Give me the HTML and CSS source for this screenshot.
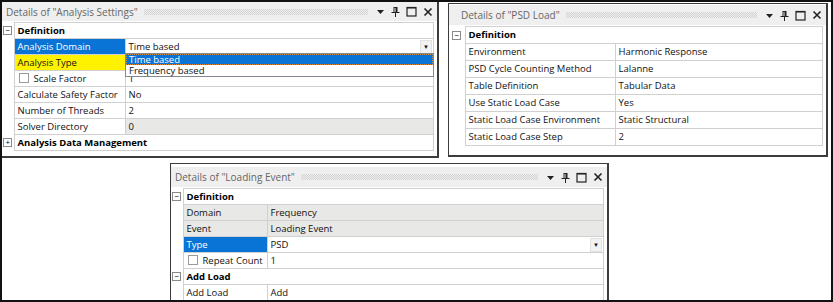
FILE: index.html
```html
<!DOCTYPE html>
<html lang="en">
<head>
    <meta charset="UTF-8">
    <title>Details panels</title>
    <link rel="stylesheet" href="styles.css">
</head>
<body>
    <div class="frame">
        <div class="top-row">
            <!-- Analysis Settings -->
            <div class="panel panel-analysis">
                <div class="titlebar">
                    <span class="title">Details of "Analysis Settings"</span>
                    <span class="grip"></span>
                    <span class="tb-icons">
                        <svg width="9" height="9" viewBox="0 0 9 9"><path d="M1 3h7L4.5 7z" fill="#222"/></svg>
                        <svg width="9" height="11" viewBox="0 0 9 11"><path d="M2.5 1h4v5h2v1H5v4H4V7H.5V6h2zM3.5 2v4h1V2z" fill="#222"/></svg>
                        <svg width="11" height="11" viewBox="0 0 11 11"><rect x="1" y="1.5" width="9" height="8.5" fill="none" stroke="#222" stroke-width="1.2"/><rect x="1" y="1" width="9" height="1.5" fill="#222"/></svg>
                        <svg width="10" height="10" viewBox="0 0 10 10"><path d="M1.5 1.5l7 7M8.5 1.5l-7 7" stroke="#222" stroke-width="1.6"/></svg>
                    </span>
                </div>
                <div class="grid-wrap">
                    <table class="grid">
                        <colgroup><col class="c-exp"><col class="c-label"><col></colgroup>
                        <tr class="group"><td class="exp"><span class="box">−</span></td><td colspan="2">Definition</td></tr>
                        <tr><td class="exp"></td><td class="sel">Analysis Domain</td><td class="drop">Time based<span class="arrow">▼</span></td></tr>
                        <tr><td class="exp"></td><td class="warn">Analysis Type</td><td></td></tr>
                        <tr><td class="exp"></td><td><span class="check"></span>Scale Factor</td><td>1</td></tr>
                        <tr><td class="exp"></td><td>Calculate Safety Factor</td><td>No</td></tr>
                        <tr><td class="exp"></td><td>Number of Threads</td><td>2</td></tr>
                        <tr><td class="exp"></td><td>Solver Directory</td><td class="ro">0</td></tr>
                        <tr class="group"><td class="exp"><span class="box">+</span></td><td colspan="2">Analysis Data Management</td></tr>
                    </table>
                    <ul class="dropdown">
                        <li class="picked">Time based</li>
                        <li>Frequency based</li>
                    </ul>
                </div>
            </div>

            <!-- PSD Load -->
            <div class="panel panel-psd">
                <div class="titlebar">
                    <span class="title">Details of "PSD Load"</span>
                    <span class="grip"></span>
                    <span class="tb-icons">
                        <svg width="9" height="9" viewBox="0 0 9 9"><path d="M1 3h7L4.5 7z" fill="#222"/></svg>
                        <svg width="9" height="11" viewBox="0 0 9 11"><path d="M2.5 1h4v5h2v1H5v4H4V7H.5V6h2zM3.5 2v4h1V2z" fill="#222"/></svg>
                        <svg width="11" height="11" viewBox="0 0 11 11"><rect x="1" y="1.5" width="9" height="8.5" fill="none" stroke="#222" stroke-width="1.2"/><rect x="1" y="1" width="9" height="1.5" fill="#222"/></svg>
                        <svg width="10" height="10" viewBox="0 0 10 10"><path d="M1.5 1.5l7 7M8.5 1.5l-7 7" stroke="#222" stroke-width="1.6"/></svg>
                    </span>
                </div>
                <div class="grid-wrap">
                    <table class="grid">
                        <colgroup><col class="c-exp"><col class="c-label"><col></colgroup>
                        <tr class="group"><td class="exp"><span class="box">−</span></td><td colspan="2">Definition</td></tr>
                        <tr><td class="exp"></td><td>Environment</td><td>Harmonic Response</td></tr>
                        <tr><td class="exp"></td><td>PSD Cycle Counting Method</td><td>Lalanne</td></tr>
                        <tr><td class="exp"></td><td>Table Definition</td><td>Tabular Data</td></tr>
                        <tr><td class="exp"></td><td>Use Static Load Case</td><td>Yes</td></tr>
                        <tr><td class="exp"></td><td>Static Load Case Environment</td><td>Static Structural</td></tr>
                        <tr><td class="exp"></td><td>Static Load Case Step</td><td>2</td></tr>
                    </table>
                </div>
            </div>
        </div>

        <div class="bottom-row">
            <!-- Loading Event -->
            <div class="panel panel-event">
                <div class="titlebar">
                    <span class="title">Details of "Loading Event"</span>
                    <span class="grip"></span>
                    <span class="tb-icons">
                        <svg width="9" height="9" viewBox="0 0 9 9"><path d="M1 3h7L4.5 7z" fill="#222"/></svg>
                        <svg width="9" height="11" viewBox="0 0 9 11"><path d="M2.5 1h4v5h2v1H5v4H4V7H.5V6h2zM3.5 2v4h1V2z" fill="#222"/></svg>
                        <svg width="11" height="11" viewBox="0 0 11 11"><rect x="1" y="1.5" width="9" height="8.5" fill="none" stroke="#222" stroke-width="1.2"/><rect x="1" y="1" width="9" height="1.5" fill="#222"/></svg>
                        <svg width="10" height="10" viewBox="0 0 10 10"><path d="M1.5 1.5l7 7M8.5 1.5l-7 7" stroke="#222" stroke-width="1.6"/></svg>
                    </span>
                </div>
                <div class="grid-wrap">
                    <table class="grid">
                        <colgroup><col class="c-exp"><col class="c-label"><col></colgroup>
                        <tr class="group"><td class="exp"><span class="box">−</span></td><td colspan="2">Definition</td></tr>
                        <tr><td class="exp"></td><td class="ro">Domain</td><td class="ro">Frequency</td></tr>
                        <tr><td class="exp"></td><td class="ro">Event</td><td class="ro">Loading Event</td></tr>
                        <tr><td class="exp"></td><td class="sel">Type</td><td class="drop">PSD<span class="arrow">▼</span></td></tr>
                        <tr><td class="exp"></td><td><span class="check"></span>Repeat Count</td><td>1</td></tr>
                        <tr class="group"><td class="exp"><span class="box">−</span></td><td colspan="2">Add Load</td></tr>
                        <tr><td class="exp"></td><td>Add Load</td><td>Add</td></tr>
                    </table>
                </div>
            </div>
        </div>
    </div>
</body>
</html>
```

FILE: styles.css
```css
/* page */
body {
    margin: 0;
    background: #fff;
    font-family: "Open Sans", "Noto Sans", sans-serif;
    font-size: 9.5px;
    color: #111;
}

.frame {
    width: 833px;
    height: 302px;
    box-sizing: border-box;
    border: 2px solid #111;
    overflow: hidden;
    display: flex;
    flex-direction: column;
}

.top-row {
    display: flex;
    align-items: flex-start;
}

.bottom-row {
    padding-left: 168px;
    margin-top: 5px;
}

/* panels */
.panel {
    background: #fff;
    border: 1px solid #3c3c3c;
    border-width: 0 2px 2px 1px;
    box-sizing: border-box;
}

.panel-analysis {
    width: 437px;
    height: 156px;
    border-left: none;
    border-top: none;
}

.panel-psd {
    width: 380px;
    height: 154px;
    margin-left: 9px;
    margin-top: 1px;
    border-top-width: 1px;
    padding-top: 1px;
}

.panel-event {
    width: 439px;
    height: 150px;
    border-top-width: 1px;
    padding-top: 3px;
}

.titlebar {
    height: 19px;
    display: flex;
    align-items: center;
    padding: 0 4px 0 4px;
    background: #efefef;
    color: #666;
    font-size: 10px;
    white-space: nowrap;
}

.panel-psd .titlebar {
    height: 20px;
    padding-left: 12px;
}

.panel-event .titlebar {
    height: 20px;
}

/* dotted drag area after the title */
.grip {
    flex: 1;
    height: 6px;
    margin: 0 8px 0 6px;
    background: repeating-conic-gradient(#d2d2d2 0 25%, transparent 0 50%) 0 0 / 2px 2px;
}

.tb-icons {
    display: flex;
    align-items: center;
    gap: 6px;
}

/* property grid */
.grid-wrap {
    position: relative;
    margin: 1px 3px 0 0;
}

.grid {
    width: 100%;
    border-collapse: collapse;
    table-layout: fixed;
}

.grid td {
    height: 15px;
    padding: 0 3px;
    border: 1px solid #d0d0d0;
    white-space: nowrap;
    overflow: hidden;
    line-height: 14px;
}

.panel-psd .grid td {
    height: 16px;
}

.grid td.exp {
    border: none;
    padding: 0;
    text-align: center;
    vertical-align: middle;
}

.c-exp { width: 12px; }
.panel-analysis .c-label { width: 111px; }
.panel-psd .c-exp { width: 16px; }
.panel-psd .c-label { width: 150px; }
.panel-event .c-label { width: 84px; }

.group td {
    font-weight: bold;
    color: #000;
}

.box {
    display: inline-block;
    width: 7px;
    height: 7px;
    border: 1px solid #8a8a8a;
    font-size: 8px;
    line-height: 6px;
    text-align: center;
    color: #000;
    font-weight: normal;
    vertical-align: middle;
}

.grid td.sel {
    background: #0a74d6;
    color: #fff;
}

.grid td.warn {
    background: #fff200;
}

.grid td.ro {
    background: #e8e8e6;
}

.grid td.drop {
    position: relative;
}

.arrow {
    position: absolute;
    right: 1px;
    top: 1px;
    width: 10px;
    height: 12px;
    background: #f2f2f2;
    border: 1px solid #e2e2e2;
    font-size: 6px;
    line-height: 12px;
    text-align: center;
    color: #111;
}

.check {
    display: inline-block;
    width: 8px;
    height: 8px;
    border: 1px solid #9a9a9a;
    background: #fff;
    margin: 0 5px 0 1px;
    vertical-align: -1px;
}

/* open dropdown list */
.dropdown {
    position: absolute;
    left: 123px;
    right: 0;
    top: 31px;
    margin: 0;
    padding: 0;
    list-style: none;
    background: #fff;
    border: 1px solid #828790;
}

.dropdown li {
    height: 11px;
    line-height: 11px;
    padding: 0 3px;
    font-size: 9.5px;
}

.dropdown li.picked {
    background: #0a74d6;
    color: #fff;
    outline: 1px dotted #d98a3a;
    outline-offset: -1px;
}
```
